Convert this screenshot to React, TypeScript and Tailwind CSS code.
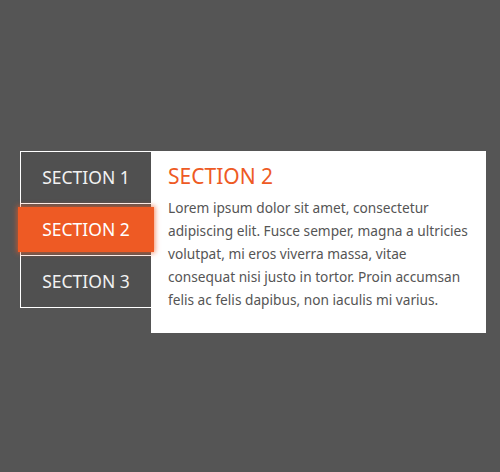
export default function App() {
  const tabs = ["SECTION 1", "SECTION 2", "SECTION 3"];
  const active = 1;
  return (
    <div
      className="min-h-[472px] w-[500px] bg-[#555555] pl-[20px] pt-[151px]"
      style={{ fontFamily: '"Noto Sans", "Open Sans", sans-serif' }}
    >
      <div className="flex">
        <ul className="flex w-[131px] flex-col self-start border border-r-0 border-white">
          {tabs.map((t, i) => (
            <li
              key={t}
              className={i > 0 ? "flex h-[52px] border-t border-white" : "flex h-[51px]"}
            >
              {i === active ? (
                <div className="relative z-10 -mx-[3px] my-[3px] flex flex-1 items-center justify-center bg-[#ee5a24] text-[17.5px] text-white shadow-[0_0_5px_1px_rgba(238,90,36,0.7)]">
                  {t}
                </div>
              ) : (
                <div className="flex flex-1 items-center justify-center bg-[#505050] text-[17.5px] text-[#f2f2f2]">
                  {t}
                </div>
              )}
            </li>
          ))}
        </ul>
        <div className="h-[182px] w-[335px] bg-white pl-[17px] pr-[12px] pt-[10px]">
          <h2 className="text-[21px] leading-[30px] text-[#ee5a24]">SECTION 2</h2>
          <p className="mt-[5px] text-[13.7px] leading-[23px] text-[#555555]">
            Lorem ipsum dolor sit amet, consectetur adipiscing elit. Fusce semper, magna a ultricies volutpat, mi eros viverra massa, vitae consequat nisi justo in tortor. Proin accumsan felis ac felis dapibus, non iaculis mi varius.
          </p>
        </div>
      </div>
    </div>
  );
}
